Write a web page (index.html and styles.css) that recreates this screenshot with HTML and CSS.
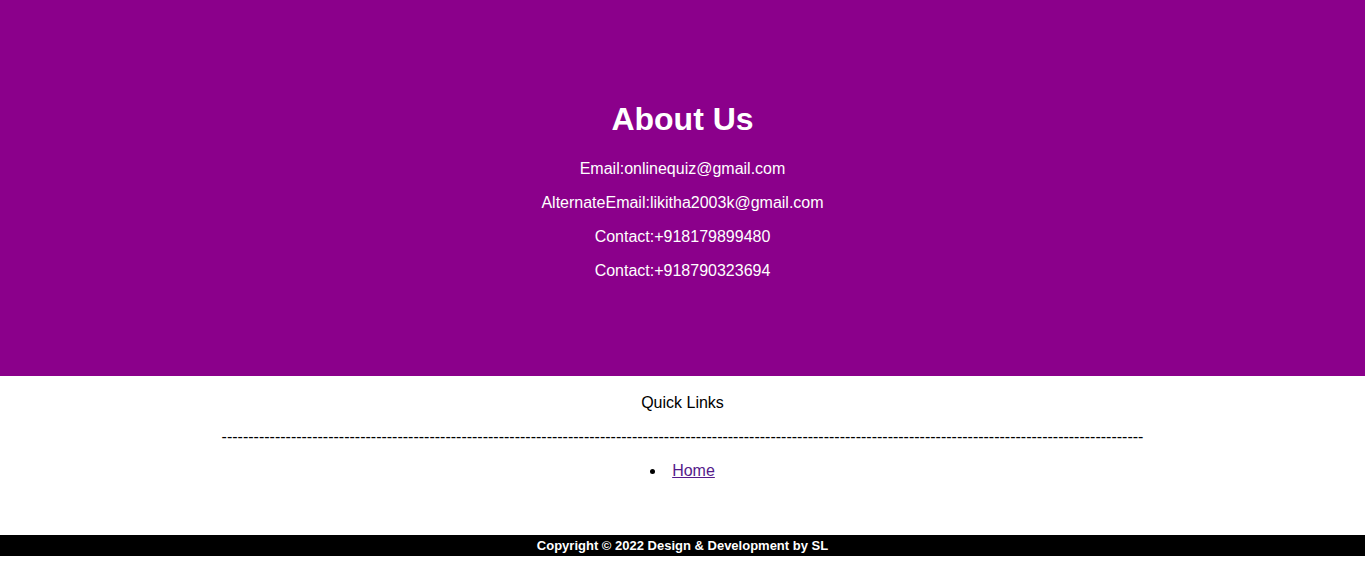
FILE: index.html
```html
<!DOCTYPE html>
<html>
<head>
<meta charset="utf-8">
<title>About Us</title>
<link rel="stylesheet" href="styles.css">
</head>
<body>
<section class="about">
  <h1 class="about-title">About Us</h1>
  <p class="about-line">Email:onlinequiz@gmail.com</p>
  <p class="about-line">AlternateEmail:likitha2003k@gmail.com</p>
  <p class="about-line">Contact:+918179899480</p>
  <p class="about-line">Contact:+918790323694</p>
</section>
<section class="links">
  <p class="links-title">Quick Links</p>
  <p class="links-rule">-----------------------------------------------------------------------------------------------------------------------------------------------------------------------------</p>
  <ul class="links-list">
    <li><a class="links-item" href="#">Home</a></li>
  </ul>
</section>
<footer class="footer">Copyright © 2022 Design &amp; Development by SL</footer>
</body>
</html>
```

FILE: styles.css
```css
html, body {
  margin: 0;
  padding: 0;
  background: #ffffff;
  font-family: "Liberation Sans", Arial, sans-serif;
  font-size: 16px;
  color: #000;
}

.about {
  background: #8b008b;
  color: #ffffff;
  text-align: center;
  padding: 80px 0 80px;
}

.about-title {
  font-size: 32px;
  font-weight: bold;
  margin: 21.44px 0;
}

.about-line {
  margin: 16px 0;
}

.links {
  text-align: center;
  padding: 1px 0 55px;
}

.links-title {
  margin: 17px 0 16px;
}

.links-rule {
  margin: 16px 0;
  white-space: nowrap;
}

.links-list {
  margin: 16px 0 0;
  padding: 0;
  list-style-position: inside;
}

.links-item {
  color: #551a8b;
}

.footer {
  background: #000;
  color: #fff;
  font-weight: bold;
  font-size: 13px;
  text-align: center;
  line-height: 21px;
  height: 21px;
}
```
